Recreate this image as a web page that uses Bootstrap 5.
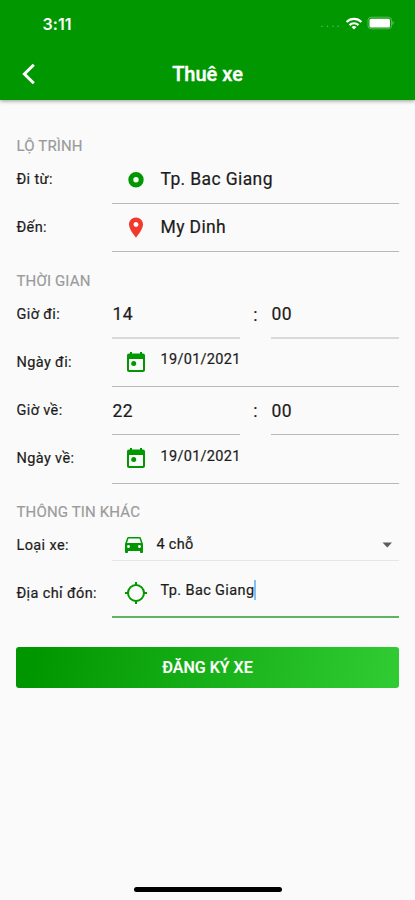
<!DOCTYPE html>
<html lang="vi">
<head>
<meta charset="utf-8">
<meta name="viewport" content="width=device-width, initial-scale=1">
<title>Thuê xe</title>
<link href="https://cdn.jsdelivr.net/npm/bootstrap@5.3.0/dist/css/bootstrap.min.css" rel="stylesheet">
<style>
  body { font-family: Roboto, "Liberation Sans", sans-serif; background: #fafafa; color: #1c1c1c; height: 900px; overflow: hidden; }
  .app-header { background: #009700; height: 100px; box-shadow: 0 1px 4px rgba(0,0,0,.4); }
  .status-bar { height: 46px; padding: 0 20px 0 42.5px; }
  .clock { font: 600 16px/1 Inter, sans-serif; letter-spacing: .1px; padding-top: 1px; }
  .title-bar { height: 54px; padding: 1px 18px 0; }
  .page-title { font-size: 20px; line-height: 24px; font-weight: 500; -webkit-text-stroke: .4px #fff; }
  .side { width: 22px; }
  .section-title { font-size: 15px; letter-spacing: .15px; line-height: 18px; color: #9b9b9b; height: 39px; padding: 20px 0 0 .5px; -webkit-text-stroke: .2px #9b9b9b; }
  .section-title.first { height: 56px; padding-top: 37px; }
  .section-title.last { height: 38px; padding-top: 19px; }
  .form-line { height: 48px; -webkit-text-stroke: .2px #1c1c1c; }
  .form-line.tall { height: 49px; }
  .form-line.select { height: 39px; }
  .form-line.address { height: 57px; }
  .caption { width: 96px; font-size: 14.5px; letter-spacing: .38px; padding: 0 0 1px .5px; }
  .select .caption { padding-top: 9px; }
  .address .caption { padding-top: 9px; }
  .field { border-bottom: 1px solid #b8b8b8; }
  .field.soft { border-bottom: 2px solid #d9d9d9; }
  .select .field { border-bottom-color: #e6e6e6; padding-top: 7px; }
  .address .field { border-bottom: 2px solid #5fb463; padding-top: 8px; }
  .field svg { flex: none; }
  .icon-box { width: 48.5px; padding-left: 12px; }
  .select .icon-box { width: 44.5px; padding-left: 10px; }
  .big { font-size: 17.5px; letter-spacing: .38px; line-height: 20px; }
  .big.pb-1 { padding-bottom: 2px !important; }
  .hour, .minute { width: 128px; padding-left: .5px; }
  .mid { font-size: 14.5px; letter-spacing: .3px; line-height: 18px; margin-bottom: 5px; }
  .address .mid { letter-spacing: .38px; margin-bottom: 4px; }
  .colon { width: 31px; }
  .caret { width: 2px; height: 20px; background: #82c0f2; margin-bottom: 5px; }
  .btn-submit { height: 41px; margin-top: 29px; border: 0; border-radius: 3px; background: linear-gradient(100deg, #009600 5%, #30cb32 98%); color: #fff; font-size: 16px; font-weight: 500; padding: 1px 0 0; -webkit-text-stroke: .2px #fff; }
  .home-bar { width: 148px; height: 5px; border-radius: 3px; background: #000; margin-bottom: 8px; }
</style>
</head>
<body class="d-flex flex-column">
<svg width="0" height="0" class="d-none">
  <symbol id="calendar" viewBox="0 1 24 24"><path d="M19 3.500h-1V2h-2v1.500H8V2H6v1.500H5c-1.110 0-2 .9-2 2V20c0 1.100.890 2 2 2h14c1.100 0 2-.9 2-2V5.500c0-1.100-.9-2-2-2zm0 16.500H5V9h14v11z"/><circle cx="9.700" cy="13.500" r="2.500"/></symbol>
</svg>
<header class="app-header text-white flex-shrink-0">
  <div class="status-bar d-flex align-items-center justify-content-between">
    <span class="clock">3:11</span>
    <div class="d-flex align-items-center">
      <svg width="20" height="8" viewBox="0 0 20 8" fill="#fff" opacity=".35"><circle cx="1" cy="7.200" r=".8"/><circle cx="6.500" cy="7.200" r=".8"/><circle cx="12" cy="7.200" r=".8"/><circle cx="17" cy="7.200" r=".8"/></svg>
      <svg class="ms-1" width="18" height="13" viewBox="0 0 18 13"><g fill="none" stroke="#fff" stroke-width="2.200"><path d="M1.600 5a10.500 10.500 0 0 1 14.800 0"/><path d="M4.500 8.100a6.400 6.400 0 0 1 9 0"/></g><path d="M9 12.600 6.500 10.100a3.600 3.600 0 0 1 5 0z" fill="#fff"/></svg>
      <svg class="ms-1" width="28" height="14" viewBox="0 0 28 14"><rect x="1" y="1.200" width="23.500" height="11.600" rx="3.200" fill="none" stroke="#fff" stroke-opacity=".35"/><rect x="2.500" y="2.700" width="20.500" height="8.800" rx="1.500" fill="#fff"/><path d="M25.500 5v4c1.500-.7 1.500-3.300 0-4z" fill="#fff" opacity=".5"/></svg>
    </div>
  </div>
  <div class="title-bar d-flex align-items-center justify-content-between">
    <svg class="side" width="22" height="22" viewBox="0 0 22 22"><path d="M15.800 1.800 6.400 11l9.400 9.200" fill="none" stroke="#fff" stroke-width="3"/></svg>
    <h1 class="page-title mb-0">Thuê xe</h1>
    <span class="side"></span>
  </div>
</header>

<main class="px-3 flex-grow-1">
  <h2 class="section-title first mb-0 fw-normal">LỘ TRÌNH</h2>
  <div class="form-line d-flex">
    <div class="caption d-flex align-items-center">Đi từ:</div>
    <div class="field flex-grow-1 d-flex align-items-center">
      <span class="icon-box d-flex"><svg width="24" height="24" viewBox="0 0 24 24"><circle cx="12" cy="11.700" r="5.200" fill="none" stroke="#009700" stroke-width="5"/></svg></span>
      <span class="big pb-1">Tp. Bac Giang</span>
    </div>
  </div>
  <div class="form-line d-flex">
    <div class="caption d-flex align-items-center">Đến:</div>
    <div class="field flex-grow-1 d-flex align-items-center">
      <span class="icon-box d-flex"><svg width="24" height="24" viewBox="0 0.500 24 24" fill="#f03a2e"><path d="M12 2C8.130 2 5 5.130 5 9c0 5.250 7 13 7 13s7-7.750 7-13c0-3.870-3.130-7-7-7zm0 9.500a2.500 2.500 0 0 1 0-5 2.500 2.500 0 0 1 0 5z"/></svg></span>
      <span class="big pb-1">My Dinh</span>
    </div>
  </div>

  <h2 class="section-title mb-0 fw-normal">THỜI GIAN</h2>
  <div class="form-line d-flex">
    <div class="caption d-flex align-items-center">Giờ đi:</div>
    <div class="field soft hour d-flex align-items-center big">14</div>
    <div class="colon d-flex align-items-center justify-content-center big">:</div>
    <div class="field soft minute d-flex align-items-center big">00</div>
  </div>
  <div class="form-line d-flex">
    <div class="caption d-flex align-items-center">Ngày đi:</div>
    <div class="field flex-grow-1 d-flex align-items-center">
      <span class="icon-box d-flex"><svg width="24" height="24" fill="#009700"><use href="#calendar"/></svg></span>
      <span class="mid">19/01/2021</span>
    </div>
  </div>
  <div class="form-line d-flex">
    <div class="caption d-flex align-items-center">Giờ về:</div>
    <div class="field hour d-flex align-items-center big">22</div>
    <div class="colon d-flex align-items-center justify-content-center big">:</div>
    <div class="field minute d-flex align-items-center big">00</div>
  </div>
  <div class="form-line tall d-flex">
    <div class="caption d-flex align-items-center">Ngày về:</div>
    <div class="field flex-grow-1 d-flex align-items-center">
      <span class="icon-box d-flex"><svg width="24" height="24" fill="#009700"><use href="#calendar"/></svg></span>
      <span class="mid">19/01/2021</span>
    </div>
  </div>

  <h2 class="section-title last mb-0 fw-normal">THÔNG TIN KHÁC</h2>
  <div class="form-line select d-flex">
    <div class="caption d-flex align-items-center">Loại xe:</div>
    <div class="field flex-grow-1 d-flex align-items-center">
      <span class="icon-box d-flex"><svg width="24" height="24" viewBox="0 0 24 24" fill="#009700"><path d="M18.920 5.010C18.720 4.420 18.160 4 17.500 4h-11c-.66 0-1.210.420-1.420 1.010L3 11v8c0 .550.450 1 1 1h1c.550 0 1-.450 1-1v-1h12v1c0 .550.450 1 1 1h1c.550 0 1-.450 1-1v-8l-2.080-5.990zM6.500 15c-.830 0-1.500-.670-1.500-1.500S5.670 12 6.500 12s1.500.670 1.500 1.500S7.330 15 6.500 15zm11 0c-.830 0-1.500-.670-1.500-1.500s.670-1.500 1.500-1.500 1.500.670 1.500 1.500-.670 1.500-1.500 1.500zM5 10l1.500-4.500h11L19 10H5z"/></svg></span>
      <span class="mid mb-0">4 chỗ</span>
      <svg class="ms-auto me-1" width="16" height="16" viewBox="0 0 16 16"><path d="M3.500 5.500h9.500l-4.750 5z" fill="#5c5c5c"/></svg>
    </div>
  </div>
  <div class="form-line address d-flex">
    <div class="caption d-flex align-items-center">Địa chỉ đón:</div>
    <div class="field flex-grow-1 d-flex align-items-center">
      <span class="icon-box d-flex"><svg width="24" height="24" viewBox="0 0 24 24" fill="none" stroke="#009700" stroke-width="2"><circle cx="12" cy="12" r="8"/><path d="M12 1v3M12 20v3M1 12h3M20 12h3"/></svg></span>
      <span class="mid">Tp. Bac Giang</span><span class="caret"></span>
    </div>
  </div>
  <button type="button" class="btn btn-submit w-100">ĐĂNG KÝ XE</button>
</main>
<div class="home-bar mx-auto flex-shrink-0"></div>
<script src="https://cdn.jsdelivr.net/npm/bootstrap@5.3.0/dist/js/bootstrap.bundle.min.js"></script>
</body>
</html>
